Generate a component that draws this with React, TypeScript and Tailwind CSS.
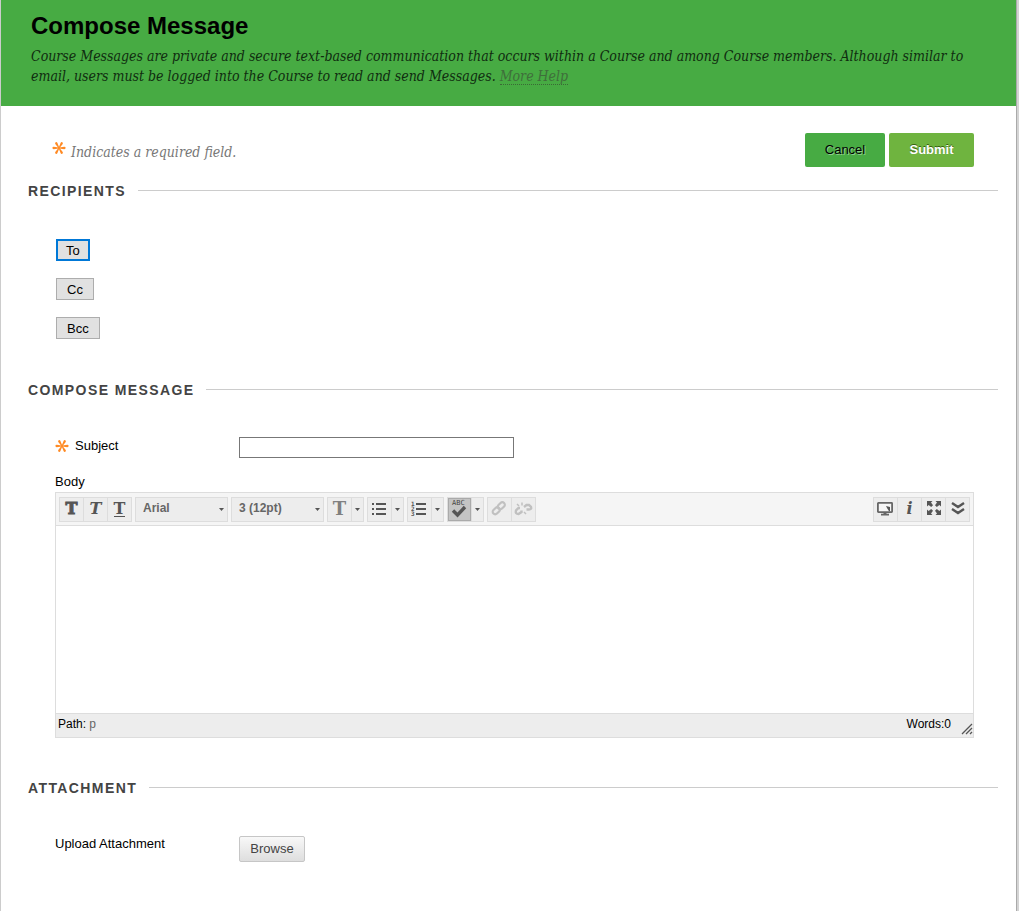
import type { ReactNode } from "react";

function Asterisk({ className = "" }: { className?: string }) {
  return (
    <svg width="14" height="14" viewBox="0 0 14 14" aria-hidden="true" className={className}>
      <g fill="#ff8a24">
        {[0, 60, 120, 180, 240, 300].map((angle) => (
          <path key={angle} d="M7 6.6L12.4 5.8Q13.6 5.9 13.6 7Q13.6 8.1 12.4 8.2L7 7.4Z" transform={`rotate(${angle} 7 7)`} />
        ))}
      </g>
    </svg>
  );
}

function SectionHeading({ children }: { children: ReactNode }) {
  return (
    <div className="ml-[27px] mr-[18px] flex h-4 items-center gap-3">
      <h2 className="text-[14px] leading-4 font-bold tracking-widest text-[#444] uppercase">{children}</h2>
      <div className="mb-px h-px flex-1 bg-[#ccc]" />
    </div>
  );
}

function Caret() {
  return (
    <svg width="5" height="3" viewBox="0 0 5 3" aria-hidden="true">
      <path d="M0 0H5L2.5 3Z" fill="#555" />
    </svg>
  );
}

function Group({ children }: { children: ReactNode }) {
  return <div className="flex h-[25px] divide-x divide-[#ddd] border border-[#ddd] bg-[#ededed]">{children}</div>;
}

function Tool({ label, children, narrow, active, disabled }: { label: string; children: ReactNode; narrow?: boolean; active?: boolean; disabled?: boolean }) {
  return (
    <button
      type="button"
      aria-label={label}
      aria-pressed={active}
      disabled={disabled}
      className={`box-content flex h-[23px] items-center justify-center ${narrow ? "w-[11px]" : "w-[23px]"} ${active ? "bg-[#c4c4c4] inset-ring inset-ring-[#aaa]" : ""}`}
    >
      {children}
    </button>
  );
}

function Picker({ label, value }: { label: string; value: string }) {
  return (
    <div className="relative h-[25px] w-[93px] border border-[#ddd] bg-[#ededed]">
      <select aria-label={label} defaultValue={value} className="h-[21px] w-full appearance-none bg-transparent pl-[7px] text-[12px] font-bold text-[#666] outline-none">
        <option>{value}</option>
      </select>
      <span className="pointer-events-none absolute top-0 right-[3px] flex h-full items-center">
        <Caret />
      </span>
    </div>
  );
}

const slab = "font-['DejaVu_Serif',serif] text-[16px] leading-4 font-bold text-[#555]";

function ListIcon({ numbered }: { numbered?: boolean }) {
  return (
    <svg width="17" height="17" viewBox="0 0 17 17" fill="#555" aria-hidden="true">
      {[2, 7, 12].map((y, i) => (
        <g key={y}>
          <rect x="5" y={y} width="10" height="2" />
          {numbered ? (
            <text x="0" y={y + 3} fontSize="6" fontWeight="bold" fontFamily="DejaVu Sans Mono, monospace">{i + 1}</text>
          ) : (
            <rect x="1" y={y} width="2" height="2" />
          )}
        </g>
      ))}
    </svg>
  );
}

function SpellIcon() {
  return (
    <svg width="19" height="21" viewBox="0 0 19 21" aria-hidden="true">
      <text x="2" y="6" fontSize="7" fontFamily="DejaVu Sans Mono, monospace" fill="#444">ABC</text>
      <path d="M3 11.5L7.5 16L15 8" fill="none" stroke="#555" strokeWidth="3.4" />
    </svg>
  );
}

function LinkIcon() {
  return (
    <svg width="17" height="17" viewBox="0 0 17 17" fill="none" stroke="#c0c0c0" strokeWidth="2.2" aria-hidden="true">
      <rect x="-1.5" y="-2.5" width="8" height="5" rx="2.5" transform="translate(3.5 11.5) rotate(-45)" />
      <rect x="-1.5" y="-2.5" width="8" height="5" rx="2.5" transform="translate(8.5 6.5) rotate(-45)" />
    </svg>
  );
}

function UnlinkIcon() {
  return (
    <svg width="19" height="17" viewBox="0 0 19 17" fill="none" stroke="#c0c0c0" strokeWidth="2.4" aria-hidden="true">
      <path d="M6 7H4.5L2 9.5Q1 13 4.5 13L7.5 11V9.5" />
      <path d="M12.5 8.5H15Q17.8 8.5 17 6L15 4H12.5L10 6" />
      <path d="M3 3L5 5M8 1.5V4.5M10 11L12 13" strokeWidth="1.5" />
    </svg>
  );
}

function ScreenIcon() {
  return (
    <svg width="17" height="17" viewBox="0 0 17 17" aria-hidden="true">
      <rect x="0.9" y="1.9" width="14.2" height="9.2" rx="0.5" fill="#f5f5f5" stroke="#666" strokeWidth="1.8" />
      <path d="M9 5L13 6V10.5L11.4 9.2L10.3 7.5Z" fill="#555" />
      <path d="M6.5 11H9.5V12.7H12V14.5H4V12.7H6.5Z" fill="#666" />
    </svg>
  );
}

function ExpandIcon() {
  return (
    <svg width="16" height="18" viewBox="0 0 16 18" aria-hidden="true">
      {[0, 90, 180, 270].map((angle) => (
        <g key={angle} transform={`rotate(${angle} 8 8)`}>
          <path d="M1 1H6.5L5 2.6L7 5.2L5.2 7L2.6 5L1 6.5Z" fill="#555" />
        </g>
      ))}
    </svg>
  );
}

function ChevronsIcon() {
  return (
    <svg width="16" height="16" viewBox="0 0 16 16" fill="none" stroke="#555" strokeWidth="2.4" aria-hidden="true">
      <path d="M2 2L8 6L14 2M2 8L8 12L14 8" />
    </svg>
  );
}

function Toolbar() {
  return (
    <div className="flex h-[33px] items-center gap-[3px] border-b border-[#ddd] bg-[#f5f5f5] px-[3px]">
      <Group>
        <Tool label="Bold"><span className={`${slab} [-webkit-text-stroke:1px_#555]`}>T</span></Tool>
        <Tool label="Italic"><span className={`${slab} italic`}>T</span></Tool>
        <Tool label="Underline"><span className="border-b border-[#555] font-['DejaVu_Serif',serif] text-[16px] leading-[14px] font-bold text-[#555]">T</span></Tool>
      </Group>
      <Picker label="Font family" value="Arial" />
      <Picker label="Font size" value="3 (12pt)" />
      <Group>
        <Tool label="Text color"><span className="font-['DejaVu_Serif',serif] text-[18px] leading-5 font-bold text-[#808080]">T</span></Tool>
        <Tool label="Text color options" narrow><Caret /></Tool>
      </Group>
      <Group>
        <Tool label="Bulleted list"><ListIcon /></Tool>
        <Tool label="Bulleted list options" narrow><Caret /></Tool>
      </Group>
      <Group>
        <Tool label="Numbered list"><ListIcon numbered /></Tool>
        <Tool label="Numbered list options" narrow><Caret /></Tool>
      </Group>
      <Group>
        <Tool label="Spell check" active><SpellIcon /></Tool>
        <Tool label="Spell check options" narrow><Caret /></Tool>
      </Group>
      <Group>
        <Tool label="Insert link" disabled><LinkIcon /></Tool>
        <Tool label="Remove link" disabled><UnlinkIcon /></Tool>
      </Group>
      <div className="ml-auto">
        <Group>
          <Tool label="Preview"><ScreenIcon /></Tool>
          <Tool label="Help"><span className={`${slab} italic`}>i</span></Tool>
          <Tool label="Full screen"><ExpandIcon /></Tool>
          <Tool label="Show more"><ChevronsIcon /></Tool>
        </Group>
      </div>
    </div>
  );
}

const recipientButton = "h-[22px] bg-[#e1e1e1] px-[10px] pt-px text-[13px] leading-5";
const serif = "font-['DejaVu_Serif_Condensed','DejaVu_Serif',serif] text-[14px] leading-5 italic";

export default function App() {
  return (
    <div className="flex min-h-screen bg-[#d4d4d4] font-['Liberation_Sans',Arial,sans-serif] text-[13px] text-black">
      <div className="mr-[2px] flex-1 border-r border-l border-r-[#aaa] border-l-[#ccc] bg-white">
        <header className="bg-[#47ab43] px-[30px] pt-3 pb-5">
          <h1 className="text-[24px] leading-7 font-bold">Compose Message</h1>
          <p className={`mt-[6px] text-[#102d10] ${serif}`}>
            Course Messages are private and secure text-based communication that occurs within a Course and among Course members. Although similar to
            <br />
            email, users must be logged into the Course to read and send Messages.{" "}
            <a href="#help" className="border-b border-dotted border-[#3a6a35] text-[#3f6f3b]">More Help</a>
          </p>
        </header>

        <form onSubmit={(event) => event.preventDefault()}>
          <div className="mt-[27px] mb-4 flex h-[34px] items-center justify-between pr-[42px] pl-[51px]">
            <p className={`flex items-center gap-[5px] pt-1 text-[#777] ${serif}`}>
              <Asterisk className="mb-2" />
              Indicates a required field.
            </p>
            <div className="flex gap-1">
              <button type="button" className="h-[34px] w-[80px] rounded-xs bg-[#47ab43] text-[13px] [text-shadow:1px_1px_0_#8fce8c]">Cancel</button>
              <button type="submit" className="h-[34px] w-[85px] rounded-xs bg-[#6fb43f] text-[13px] font-bold text-white [text-shadow:0_-1px_0_#356010]">Submit</button>
            </div>
          </div>

          <section>
            <SectionHeading>Recipients</SectionHeading>
            <div className="mt-10 flex flex-col items-start gap-[17px] pl-[55px]">
              <button type="button" className="h-[22px] border-2 border-[#0078d7] bg-[#e1e1e1] px-2 pt-px text-[13px] leading-[18px]">To</button>
              <button type="button" className={`${recipientButton} border border-[#adadad]`}>Cc</button>
              <button type="button" className={`${recipientButton} border border-[#adadad]`}>Bcc</button>
            </div>
          </section>

          <section className="mt-[43px]">
            <SectionHeading>Compose Message</SectionHeading>
            <div className="mt-[39px] flex items-start pl-[54px]">
              <label htmlFor="subject" className="flex w-[184px] items-center gap-[6px] leading-[18px]">
                <Asterisk />
                Subject
              </label>
              <input id="subject" type="text" required className="h-[21px] w-[275px] border border-[#777] bg-white px-1 shadow-none outline-none" />
            </div>
            <label htmlFor="body" className="mt-4 block pl-[54px] leading-4">Body</label>
            <div className="mt-[2px] mr-[42px] ml-[54px] border border-[#ddd]">
              <Toolbar />
              <textarea id="body" className="block h-[187px] w-full resize-none bg-white p-2 outline-none" />
              <div className="flex h-6 justify-between border-t border-[#ddd] bg-[#ededed] pl-[2px] text-[12px] leading-5">
                <span>Path: <a href="#path" className="text-[#666]">p</a></span>
                <span className="flex items-end gap-[10px]">
                  <span className="h-full">Words:0</span>
                  <svg width="12" height="12" viewBox="0 0 12 12" stroke="#555" className="mb-[2px]" aria-hidden="true">
                    <path d="M1 11L11 1M5 11L11 5M9 11L11 9" strokeWidth="1.3" />
                  </svg>
                </span>
              </div>
            </div>
          </section>

          <section className="mt-[42px] pb-12">
            <SectionHeading>Attachment</SectionHeading>
            <div className="mt-10 flex items-start pl-[54px]">
              <label htmlFor="browse" className="w-[184px] leading-4">Upload Attachment</label>
              <button id="browse" type="button" className="h-[26px] w-[66px] rounded-xs border border-[#c6c6c6] bg-linear-to-b from-[#f8f8f8] to-[#dedede] text-[13px] text-[#444]">Browse</button>
            </div>
          </section>
        </form>
      </div>
    </div>
  );
}
